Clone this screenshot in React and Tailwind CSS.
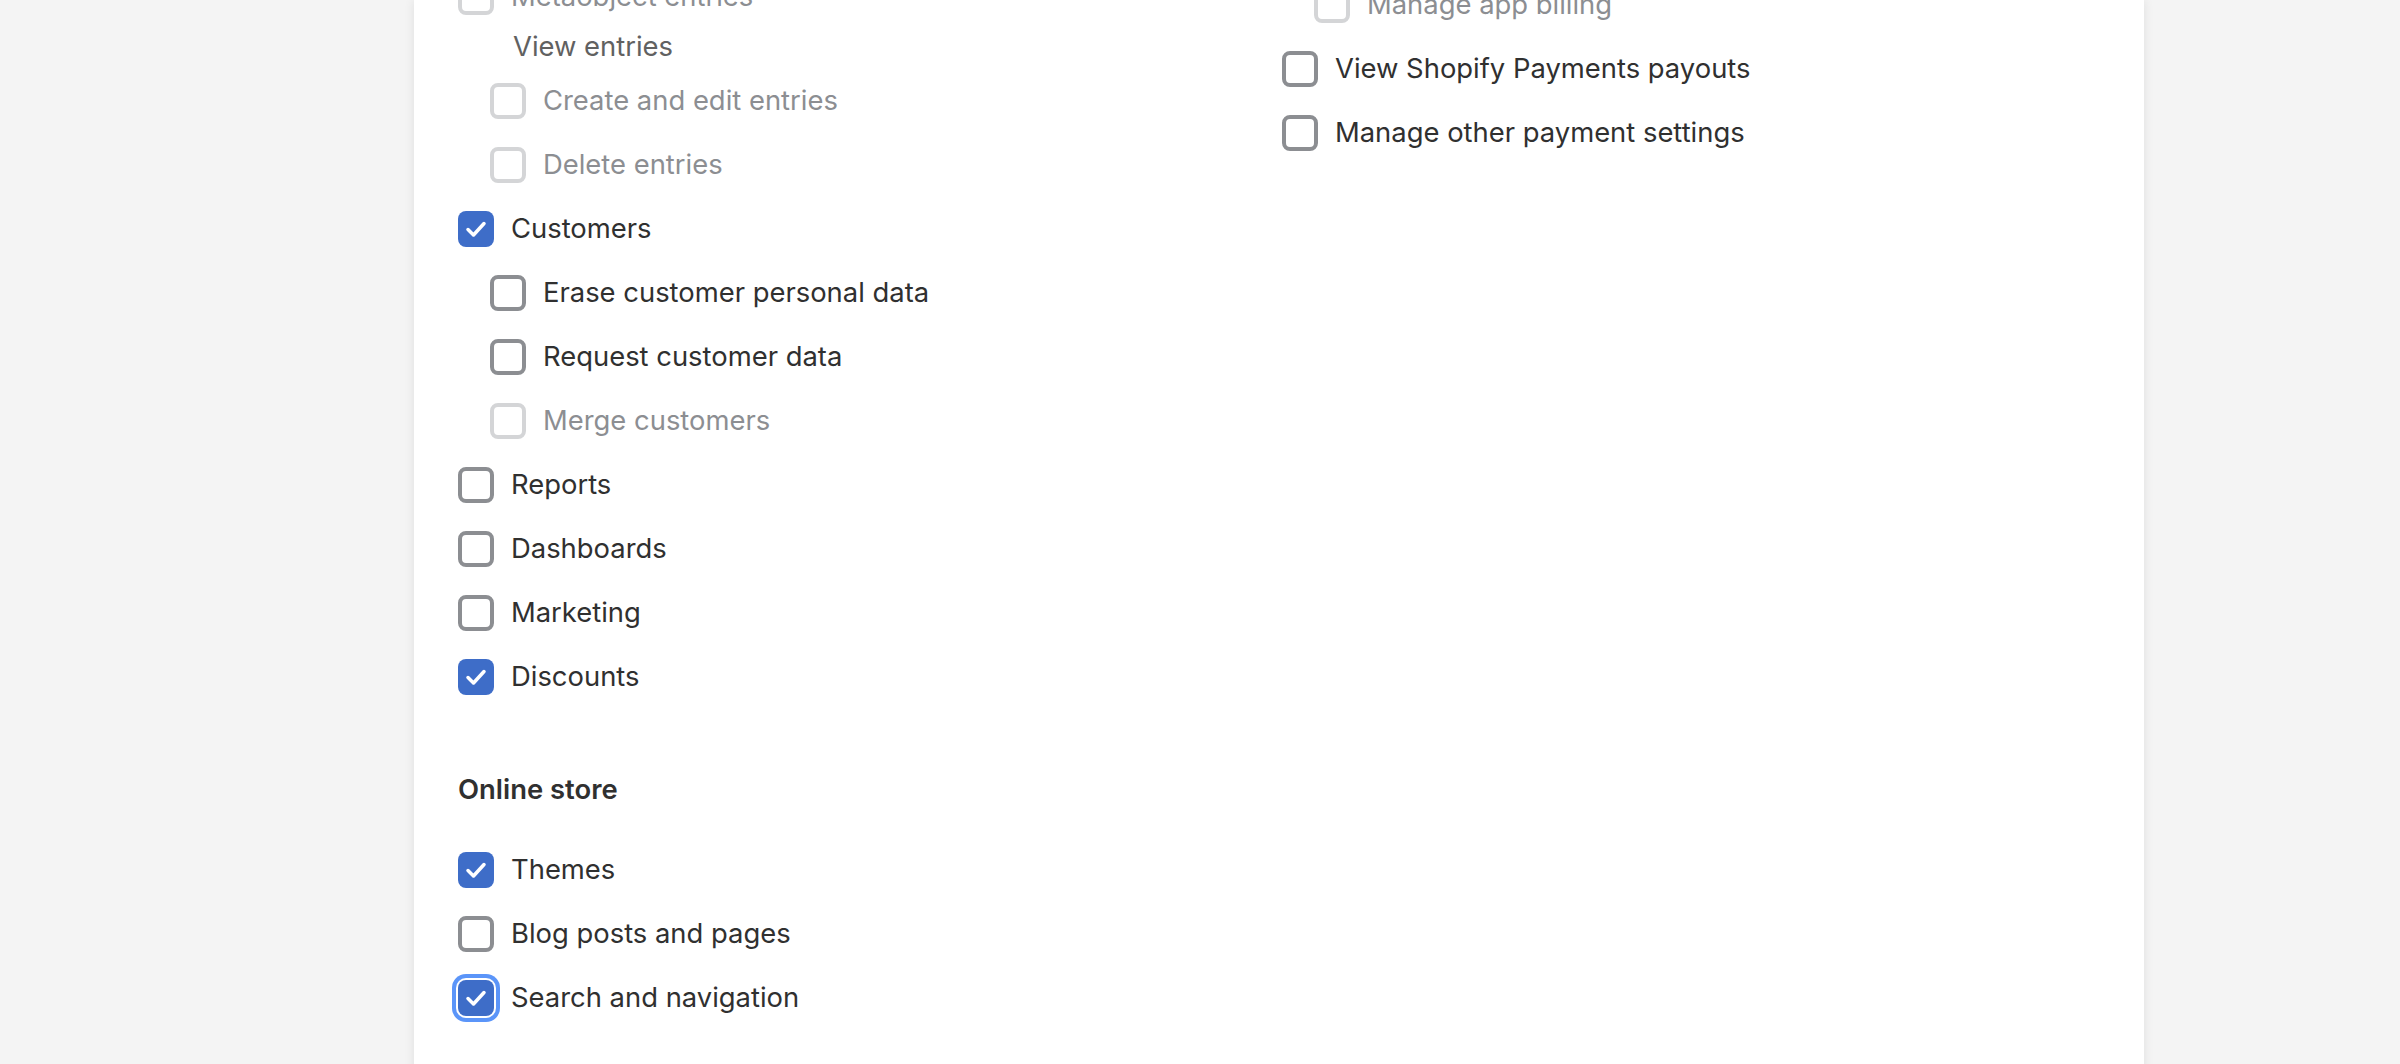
import React from "react"

// permission rows, "on" | "off" | "disabled"
const leftRows = [
  { label: "Create and edit entries", state: "disabled", indent: true },
  { label: "Delete entries", state: "disabled", indent: true },
  { label: "Customers", state: "on" },
  { label: "Erase customer personal data", state: "off", indent: true },
  { label: "Request customer data", state: "off", indent: true },
  { label: "Merge customers", state: "disabled", indent: true },
  { label: "Reports", state: "off" },
  { label: "Dashboards", state: "off" },
  { label: "Marketing", state: "off" },
  { label: "Discounts", state: "on" },
]

const onlineStore = [
  { label: "Themes", state: "on" },
  { label: "Blog posts and pages", state: "off" },
  { label: "Search and navigation", state: "on", focus: true },
]

const rightRows = [
  { label: "Manage app billing", state: "disabled", indent: true },
  { label: "View Shopify Payments payouts", state: "off" },
  { label: "Manage other payment settings", state: "off" },
]

function Checkbox({ state, focus }) {
  if (state === "on") {
    return (
      <span
        className={`flex h-[36px] w-[36px] shrink-0 items-center justify-center rounded-[8px] bg-[#3e6dc8] ${
          focus ? "ring-4 ring-[#5b95f9] ring-offset-2 ring-offset-white" : ""
        }`}
      >
        <svg viewBox="0 0 36 36" className="h-[36px] w-[36px]" fill="none">
          <path
            d="M10 18.5l5.5 5.5 10.5-11.5"
            stroke="white"
            strokeWidth="3.5"
            strokeLinecap="round"
            strokeLinejoin="round"
          />
        </svg>
      </span>
    )
  }
  return (
    <span
      className={`block h-[36px] w-[36px] shrink-0 rounded-[8px] border-4 bg-white ${
        state === "disabled" ? "border-[#d4d5d7]" : "border-[#8c8e92]"
      }`}
    />
  )
}

function Row({ label, state = "off", indent, focus }) {
  return (
    <div className={`flex h-[64px] items-center gap-[17px] ${indent ? "pl-[32px]" : ""}`}>
      <Checkbox state={state} focus={focus} />
      <span className={state === "disabled" ? "text-[#8c8e92]" : "text-[#303030]"}>{label}</span>
    </div>
  )
}

export default function App() {
  return (
    <div className="h-screen overflow-hidden bg-[#f4f4f4] font-['Inter','Liberation_Sans',sans-serif] text-[27.4px]">
      <div className="ml-[414px] min-h-[1100px] w-[1730px] bg-white pl-[44px] pr-[44px] shadow-[0_0_10px_rgba(0,0,0,0.09)]">
        <div className="grid grid-cols-[824px_1fr]">
          {/* left column */}
          <div className="-mt-[35px] flex flex-col">
            <Row label="Metaobject entries" state="disabled" />
            <div className="h-[40px] pl-[55px] leading-[34px] text-[#616161]">View entries</div>
            {leftRows.map((r, i) => (
              <Row key={i} {...r} />
            ))}
            <div className="pt-[60px] pb-[29px]">
              <h2 className="leading-[40px] font-semibold text-[#303030]">Online store</h2>
            </div>
            {onlineStore.map((r, i) => (
              <Row key={i} {...r} />
            ))}
          </div>

          {/* right column */}
          <div className="-mt-[27px] flex flex-col">
            {rightRows.map((r, i) => (
              <Row key={i} {...r} />
            ))}
          </div>
        </div>
      </div>
    </div>
  )
}
